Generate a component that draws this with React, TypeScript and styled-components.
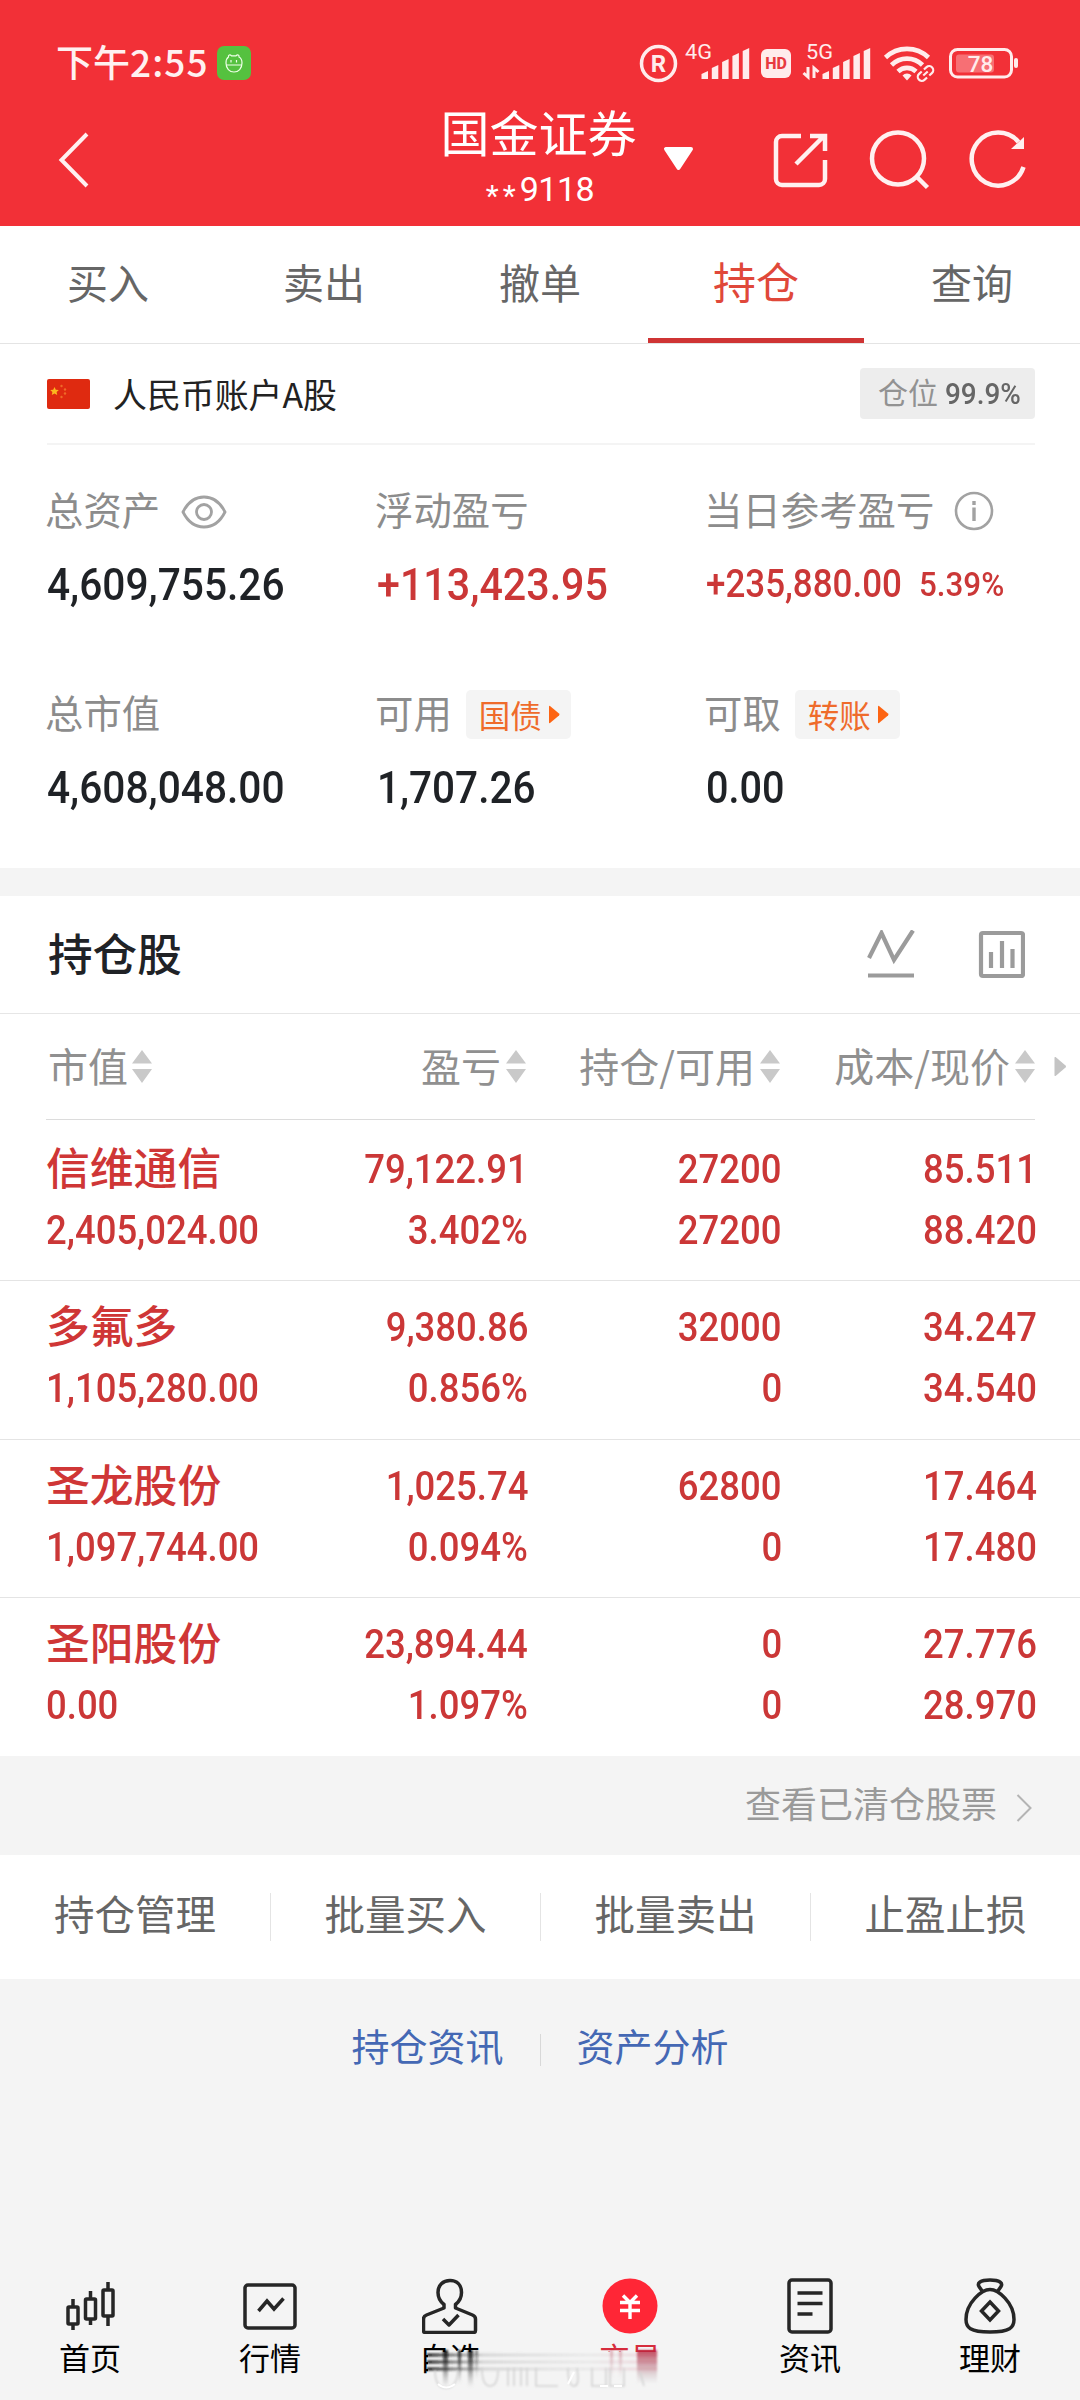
import React from "react";
import styled, { createGlobalStyle } from "styled-components";

const cjk = `"Noto Sans CJK SC", "Noto Sans", sans-serif`;

const Global = createGlobalStyle`
  html, body { margin: 0; padding: 0; background: #f4f4f4; }
  * { box-sizing: border-box; }
  body { font-family: ${cjk}; }
`;

const Page = styled.div`
  width: 1080px;
  height: 2400px;
  display: flex;
  flex-direction: column;
  background: #f4f4f4;
  overflow: hidden;
  white-space: nowrap;
`;

/* Condensed numerals */
const Num = styled.span<{ $size: number; $color?: string; $weight?: number; $from?: string; $squeeze?: number }>`
  display: inline-block;
  font-family: Roboto, "Noto Sans", sans-serif;
  font-size: ${(p) => p.$size}px;
  font-weight: ${(p) => p.$weight ?? 500};
  line-height: 1;
  color: ${(p) => p.$color ?? "#1f2226"};
  transform: scaleX(${(p) => p.$squeeze ?? 0.904});
  transform-origin: ${(p) => p.$from ?? "left"} center;
`;

const Header = styled.header`
  height: 226px;
  background: #f23037;
  color: #fff0f0;
  display: flex;
  flex-direction: column;
  flex: none;
`;
const StatusBar = styled.div`
  height: 98px;
  padding: 28px 62px 0 56px;
  display: flex;
  align-items: center;
  justify-content: space-between;
`;
const Clock = styled.div`
  display: flex;
  align-items: center;
  font-size: 37px;
  line-height: 1;
  font-weight: 500;
`;
const ClockText = styled.span`
  padding-bottom: 3px;
  margin-right: 8px;
`;
const ClockDigits = styled.span`
  letter-spacing: 1.1px;
`;
const TitleBar = styled.div`
  flex: 1;
  display: grid;
  grid-template-columns: 1fr 200px 1fr;
  align-items: start;
`;
const BackCell = styled.div`
  padding: 34px 0 0 58px;
`;
const TitleCell = styled.div`
  display: flex;
  flex-direction: column;
  align-items: center;
  color: #fff;
`;
const Broker = styled.div`
  font-size: 49px;
  line-height: 56px;
  padding-top: 5px;
  margin-left: -3px;
`;
const AccountNo = styled.div`
  display: flex;
  align-items: flex-start;
  font-family: Roboto, "Noto Sans", sans-serif;
  font-size: 34px;
  line-height: 36px;
  margin-top: 12px;
  font-weight: 400;
  letter-spacing: -0.5px;
`;
const Stars = styled.span`
  font-size: 30px;
  line-height: 36px;
  padding-top: 7px;
  letter-spacing: 4px;
`;
const ActionsCell = styled.div`
  display: flex;
  padding: 27px 0 0 22px;
`;

const Tabs = styled.nav`
  height: 118px;
  flex: none;
  display: grid;
  grid-template-columns: repeat(5, 1fr);
  background: #fff;
  border-bottom: 1px solid #e4e4e4;
`;
const Tab = styled.div<{ $active?: boolean }>`
  display: flex;
  justify-content: center;
  align-items: center;
  font-size: ${(p) => (p.$active ? 43 : 41)}px;
  line-height: 1;
  color: ${(p) => (p.$active ? "#e0483a" : "#666")};
  border-bottom: 5px solid ${(p) => (p.$active ? "#cf3434" : "transparent")};
  padding-bottom: ${(p) => (p.$active ? 4 : 1)}px;
`;

const Summary = styled.section`
  height: 524px;
  flex: none;
  padding: 0 45px 0 47px;
  background: #fff;
`;
const AccountRow = styled.div`
  height: 101px;
  display: flex;
  align-items: center;
  border-bottom: 2px solid #f4f4f4;
`;
const AccountName = styled.span`
  margin-left: 23px;
  font-size: 33.9px;
  line-height: 1;
  color: #222;
  flex: 1;
`;
const Ratio = styled.div`
  width: 175px;
  height: 51px;
  border-radius: 4px;
  background: #ededed;
  display: flex;
  align-items: center;
  gap: 7px;
  padding-left: 18px;
  font-size: 30px;
  line-height: 1;
  color: #929292;
`;
const RatioLabel = styled.span`
  padding-bottom: 6px;
`;
const Stats = styled.div`
  display: grid;
  grid-template-columns: 330px 329px 1fr;
  padding-top: 41px;
`;
const Stat = styled.div`
  height: 203px;
`;
const StatLabel = styled.div`
  display: flex;
  align-items: center;
  height: 50px;
  font-size: 38.4px;
  line-height: 1;
  color: #8c8c8c;
  margin-left: -2px;
  padding-bottom: 5px;
`;
const StatValue = styled.div`
  display: flex;
  align-items: center;
  height: 50px;
  margin-top: 23px;
`;
const Chip = styled.span`
  width: 105px;
  height: 49px;
  margin: 6px 0 0 14px;
  border-radius: 5px;
  background: #f4f4f4;
  display: flex;
  align-items: center;
  gap: 6px;
  padding-left: 13px;
  font-size: 31.5px;
  line-height: 1;
  color: #ef6b2b;
`;

const Holdings = styled.section`
  margin-top: 28px;
  flex: none;
  background: #fff;
`;
const HoldingsBar = styled.div`
  height: 118px;
  padding: 0 55px 0 48px;
  display: flex;
  align-items: center;
  border-bottom: 1px solid #e6e6e6;
`;
const HoldingsTitle = styled.h2`
  margin: 0;
  flex: 1;
  padding-bottom: 4px;
  font-size: 44.6px;
  line-height: 1;
  font-weight: 500;
  color: #202226;
`;
const columns = `
  display: grid;
  grid-template-columns: 200px 280px 254px 255px;
`;
const ColumnHeads = styled.div`
  ${columns}
  position: relative;
  height: 106px;
  margin: 0 45px 0 46px;
  align-items: center;
  border-bottom: 1px solid #dcdcdc;
`;
const Head = styled.div<{ $first?: boolean }>`
  display: flex;
  align-items: center;
  justify-content: ${(p) => (p.$first ? "flex-start" : "flex-end")};
  gap: ${(p) => (p.$first ? 4 : 5)}px;
  padding-left: ${(p) => (p.$first ? 2 : 0)}px;
  font-size: 40px;
  line-height: 1;
  color: #909090;
`;
const HeadText = styled.span`
  padding-bottom: 4px;
`;
const MoreColumns = styled.span`
  position: absolute;
  right: -32px;
  top: 42px;
  display: flex;
`;
const Row = styled.div<{ $first?: boolean }>`
  ${columns}
  height: ${(p) => (p.$first ? 160 : 158.6)}px;
  padding: ${(p) => (p.$first ? 16.5 : 13.5)}px 45px 0 46px;
  & + & { border-top: 1px solid #e4e4e4; }
`;
const Cell = styled.div<{ $first?: boolean }>`
  display: flex;
  flex-direction: column;
  align-items: ${(p) => (p.$first ? "flex-start" : "flex-end")};
  margin-right: ${(p) => (p.$first ? 0 : -2)}px;
`;
const Line = styled.div<{ $number?: boolean }>`
  height: 61px;
  display: flex;
  align-items: center;
  padding-top: ${(p) => (p.$number ? 5 : 0)}px;
`;
const StockName = styled.span`
  font-size: 43.8px;
  line-height: 1;
  font-weight: 500;
  color: #cf3636;
`;

const Cleared = styled.div`
  height: 99px;
  flex: none;
  padding: 0 48px 0 0;
  display: flex;
  align-items: center;
  justify-content: flex-end;
  gap: 19px;
  font-size: 36px;
  line-height: 1;
  color: #9a9a9a;
`;
const ClearedText = styled.span`
  padding-bottom: 7px;
`;
const Chevron = styled.svg`
  margin-top: 5px;
`;
const Actions = styled.div`
  height: 124px;
  flex: none;
  background: #fff;
  display: grid;
  grid-template-columns: repeat(4, 1fr);
  align-items: center;
`;
const Action = styled.div`
  height: 48px;
  display: flex;
  align-items: center;
  justify-content: center;
  padding-bottom: 8px;
  font-size: 40.5px;
  line-height: 1;
  color: #666;
  & + & { border-left: 1px solid #e4e4e4; }
`;
const Links = styled.div`
  flex: 1;
  display: flex;
  justify-content: center;
  padding-top: 45px;
  font-size: 38px;
  line-height: 42px;
  color: #4468b4;
`;
const LinkText = styled.span`
  padding: 0 36px;
`;
const LinkRule = styled.span`
  width: 1px;
  height: 32px;
  margin-top: 10px;
  background: #d8d8d8;
`;

const BottomNav = styled.nav`
  position: relative;
  height: 128px;
  flex: none;
  display: grid;
  grid-template-columns: repeat(6, 1fr);
`;
const NavItem = styled.div<{ $active?: boolean }>`
  display: flex;
  flex-direction: column;
  align-items: center;
  font-size: 31px;
  line-height: 34px;
  color: ${(p) => (p.$active ? "#d62c3c" : "#000")};
`;
const NavIcon = styled.div`
  height: 68px;
  display: flex;
  align-items: center;
`;
const SmudgeLayer = styled.svg`
  position: absolute;
  left: 420px;
  top: 72px;
`;

const stroke = { fill: "none", stroke: "#fff0f0", strokeWidth: 5 } as const;

const StatusIcons = () => (
  <svg width="380" height="60" viewBox="638 33 380 60" fill="#ffecec">
    <circle cx="658.500" cy="63.500" r="17" fill="none" stroke="#ffecec" strokeWidth="3.500" />
    <text x="658.500" y="72" textAnchor="middle" fontFamily="Roboto" fontWeight="700" fontSize="24">R</text>
    <text x="685" y="59" fontFamily="Roboto" fontSize="21" textLength="27" lengthAdjust="spacingAndGlyphs">4G</text>
    {[0, 1, 2, 3, 4].map((i) => (
      <path key={i} d={`M${701.500 + i * 10.300} 79V${[74, 68, 62, 56, 51][i]}l6.500 -3V79z`} />
    ))}
    <rect x="761" y="49" width="30" height="29" rx="6" />
    <text x="776" y="69" textAnchor="middle" fontFamily="Roboto" fontWeight="800" fontSize="16" fill="#e83a40">HD</text>
    <text x="806" y="59" fontFamily="Roboto" fontSize="21" textLength="27" lengthAdjust="spacingAndGlyphs">5G</text>
    <path d="M808 67v10l-4.500 -4M814 78V68l4.500 4" fill="none" stroke="#ffecec" strokeWidth="3" />
    {[0, 1, 2, 3, 4].map((i) => (
      <path key={i} d={`M${822.500 + i * 10.300} 79V${[74, 68, 62, 56, 51][i]}l6.500 -3V79z`} />
    ))}
    <g fill="none" stroke="#ffecec" strokeWidth="4.600">
      <path d="M885.500 57.500a31 31 0 0 1 43 0" />
      <path d="M891.500 65a22 22 0 0 1 31 0" />
      <path d="M898 71.500a13 13 0 0 1 18 0" />
    </g>
    <path d="M902.500 75.500a6 6 0 0 1 9 0l-4.500 5z" />
    <g fill="none" stroke="#ffecec" strokeWidth="2.200" transform="rotate(-42 925.500 73.500)">
      <path d="M924 69.500h-3.500a4 4 0 0 0 0 8h3.500M927 69.500h3.500a4 4 0 0 1 0 8h-3.500M922.500 73.500h6" />
    </g>
    <rect x="950.500" y="49.500" width="61" height="27.500" rx="7" fill="none" stroke="#ffecec" strokeWidth="3" />
    <rect x="956" y="54.500" width="38" height="18" rx="3" fill="#f76f74" />
    <text x="980.500" y="71.500" textAnchor="middle" fontFamily="Roboto" fontWeight="500" fontSize="22.500">78</text>
    <rect x="1014" y="58" width="4" height="10" rx="2" />
  </svg>
);

const AppBadge = () => (
  <svg width="34" height="34" viewBox="0 0 34 34">
    <rect width="34" height="34" rx="7" fill="#55c13f" />
    <g fill="none" stroke="#efffe9" strokeWidth="1.200">
      <path d="M9 17c0-3.500 1-5 2.500-6-.5-2 1.500-3 3-1.200h4.500c1.500-1.800 3.500-.8 3 1.200C24 12 25 13.500 25 17c0 5.500-3.500 9-8 9s-8-3.500-8-9zM9 19h16" />
      <path d="M14 14v2.500M19.500 14v2.500" />
    </g>
  </svg>
);

const Back = () => (
  <svg width="32" height="56" viewBox="0 0 32 56" {...stroke}>
    <path d="M29 2L3.500 28 29 54" strokeWidth="4" />
  </svg>
);

const HeaderIcons = () => (
  <svg width="370" height="70" viewBox="662 125 370 70" {...stroke} strokeWidth={4.500}>
    <path d="M666 149h25l-12.500 19z" fill="#fff" stroke="#fff" strokeWidth="4" strokeLinejoin="round" />
    <path d="M801 136h-19a6 6 0 0 0-6 6v37a6 6 0 0 0 6 6h37a6 6 0 0 0 6-6v-19" />
    <path d="M796 164l28-28M810 136h15v15" />
    <circle cx="898" cy="158.500" r="26" />
    <path d="M917 177l10.500 10.500" />
    <path d="M1023.500 167a26.500 26.500 0 1 1-5-25" />
    <path d="M1024 137v12h-13z" fill="#fff0f0" stroke="none" />
  </svg>
);

const Flag = () => (
  <svg width="43" height="30" viewBox="0 0 43 30">
    <rect width="43" height="30" rx="2" fill="#df2a10" />
    <path d="M7.500 8l1.300 2.700 3 .3-2.200 2 .6 3-2.700-1.400L4.800 16l.6-3-2.200-2 3-.3z" fill="#fbb81e" />
    <g fill="#ee6a28">
      <circle cx="14.500" cy="7" r="1.200" /><circle cx="18" cy="10.500" r="1.200" />
      <circle cx="18" cy="14.500" r="1.200" /><circle cx="14.500" cy="18" r="1.200" />
    </g>
  </svg>
);

const Eye = styled(({ className }: { className?: string }) => (
  <svg className={className} width="46" height="36" viewBox="0 0 46 36" fill="none" stroke="#a2a2a2" strokeWidth="2.800">
    <path d="M2 18C7 8 14 3 23 3s16 5 21 15C39 28 32 33 23 33S7 28 2 18z" />
    <circle cx="23" cy="18" r="7.500" />
  </svg>
))`
  margin: 6px 0 0 21px;
`;

const Info = styled(({ className }: { className?: string }) => (
  <svg className={className} width="40" height="40" viewBox="0 0 40 40" fill="none" stroke="#a2a2a2" strokeWidth="2.600">
    <circle cx="20" cy="20" r="18" />
    <path d="M20 16.500V30M20 10v4" strokeWidth="3.400" />
  </svg>
))`
  margin: 4px 0 0 20px;
`;

const Play = ({ color, w, h }: { color: string; w: number; h: number }) => (
  <svg width={w} height={h} viewBox="0 0 12 19">
    <path d="M1 1.500Q1 .5 2 1l9 7.500q1 1 0 2L2 18q-1 .5-1-.5z" fill={color} />
  </svg>
);

const Sort = () => (
  <svg width="20" height="33" viewBox="0 0 20 33" fill="#c9c9c9">
    <path d="M10 0l10 13.500H0zM10 33L0 19h20z" />
  </svg>
);

const BarIcons = () => (
  <svg width="158" height="50" viewBox="867 930 158 50" fill="none" stroke="#9b9b9b" strokeWidth="4.200">
    <path d="M869 958l12.500-25 12.500 27 19-29.500M868 975.500h46" />
    <rect x="981" y="933" width="42" height="43" rx="2" />
    <path d="M991 952v16M1002 941v27M1012.500 949v19" />
  </svg>
);

const navStroke = { fill: "none", stroke: "#262626", strokeWidth: 3.5 } as const;

const Candles = () => (
  <svg width="50" height="54" viewBox="0 0 50 54" {...navStroke}>
    <rect x="3" y="28" width="10" height="17" rx="1" /><path d="M8 20v8M8 45v6" />
    <rect x="20.500" y="20" width="10" height="20" rx="1" /><path d="M25.500 12v8M25.500 40v6" />
    <rect x="38" y="11" width="10" height="26" rx="1" /><path d="M43 3v8M43 37v10" />
  </svg>
);
const Quote = () => (
  <svg width="54" height="54" viewBox="0 0 54 54" {...navStroke}>
    <rect x="2" y="6" width="50" height="43" rx="3" />
    <path d="M15.500 32l8.500-10 7 8 9.500-10.500" />
  </svg>
);
const Person = () => (
  <svg width="56" height="56" viewBox="0 0 56 56" {...navStroke} strokeLinejoin="round">
    <path d="M22 30v-3.500C17.500 23 16 19 16 14.500 16 7 21 2.500 28 2.500S39.500 7 39.500 14.500c0 4.500-1.500 8.500-6 12V30l17 7c2 .8 3 2 3 4v11.500q0 2-2 2h-48q-2 0-2-2V41c0-2 1-3.200 3-4z" />
    <path d="M21 41l6 6 9.500-10" />
  </svg>
);
const Yen = () => (
  <svg width="56" height="56" viewBox="0 0 56 56">
    <circle cx="28" cy="28" r="27.500" fill="#ff2636" />
    <path d="M21 17.500l7 7 7-7M28 24v17M18 24.500h20M18 32.500h20" fill="none" stroke="#fff" strokeWidth="3.400" />
  </svg>
);
const News = () => (
  <svg width="46" height="56" viewBox="0 0 46 56" {...navStroke}>
    <rect x="2" y="2" width="42" height="52" rx="3" />
    <path d="M10.500 15h25M10.500 25.500h25M10.500 36h15" />
  </svg>
);
const Bag = () => (
  <svg width="52" height="56" viewBox="0 0 52 56" {...navStroke}>
    <path d="M18.500 13.500L15 8.500c-2-3.500 1-6.500 11-6.500s13 3 11 6.500l-3.500 5" />
    <path d="M26 11.500c-8 0-24 13-24 30 0 8 4 12.500 24 12.500s24-4.500 24-12.500c0-17-16-30-24-30z" />
    <path d="M26 24l8.500 9-8.500 9-8.500-9z" />
  </svg>
);

/* Smeared strip over the lower half of the two middle labels */
const Smudge = () => (
  <SmudgeLayer width="250" height="56" viewBox="420 2344 250 56">
    <defs>
      <linearGradient id="across" x1="0" x2="1" y1="0" y2="0">
        <stop offset="0" stopColor="#000" stopOpacity="0.95" />
        <stop offset="0.1" stopColor="#222" stopOpacity="0.6" />
        <stop offset="0.25" stopColor="#777" stopOpacity="0.25" />
        <stop offset="0.7" stopColor="#aaa" stopOpacity="0.14" />
        <stop offset="1" stopColor="#e05070" stopOpacity="0.2" />
      </linearGradient>
      <linearGradient id="down" x1="0" x2="0" y1="0" y2="1">
        <stop offset="0" stopColor="#000" stopOpacity="0.85" />
        <stop offset="0.5" stopColor="#333" stopOpacity="0.5" />
        <stop offset="1" stopColor="#999" stopOpacity="0" />
      </linearGradient>
      <linearGradient id="downRed" x1="0" x2="0" y1="0" y2="1">
        <stop offset="0" stopColor="#b8203a" stopOpacity="0.8" />
        <stop offset="0.5" stopColor="#b06070" stopOpacity="0.45" />
        <stop offset="1" stopColor="#aaa" stopOpacity="0" />
      </linearGradient>
      <filter id="soft" x="-20%" y="-20%" width="140%" height="140%"><feGaussianBlur stdDeviation="1.1" /></filter>
    </defs>
    <rect x="428" y="2352" width="232" height="38" fill="#f4f4f4" />
    <g fill="url(#across)" filter="url(#soft)">
      <rect x="427" y="2353.500" width="230" height="3" />
      <rect x="427" y="2360.500" width="230" height="3" />
      <rect x="427" y="2367.500" width="230" height="3" />
    </g>
    <g fill="url(#down)" filter="url(#soft)">
      <rect x="443" y="2350" width="5" height="38" />
      <rect x="458" y="2350" width="3" height="34" />
      <rect x="468" y="2350" width="5" height="38" />
      <rect x="475" y="2350" width="3" height="30" opacity="0.5" />
    </g>
    <g fill="url(#downRed)" filter="url(#soft)">
      <rect x="637" y="2350" width="20" height="34" />
      <rect x="610" y="2350" width="3" height="30" opacity="0.4" />
      <rect x="619" y="2350" width="3" height="30" opacity="0.4" />
    </g>
    <g fill="none" stroke="#d2d2d2" strokeWidth="1.600" filter="url(#soft)">
      <path d="M435 2370q0 18 11 18t12-18M482 2368q0 18 8 18t8-16M508 2368v18M514 2368v18M521 2368v18M527 2368v18M536 2368v18h22M568 2368q0 18 6 18t3-18M592 2368v18h14v-18M610 2368v18h14v-18M640 2372q4 14 4 14" />
    </g>
    <path d="M438 2384q8 7 17 0M568 2384l6-12M600 2386h8M614 2386h8" fill="none" stroke="#fff" strokeWidth="2" />
  </SmudgeLayer>
);

const red = "#cb3737";

const rows = [
  { name: "信维通信", cells: [["", "2,405,024.00"], ["79,122.91", "3.402%"], ["27200", "27200"], ["85.511", "88.420"]] },
  { name: "多氟多", cells: [["", "1,105,280.00"], ["9,380.86", "0.856%"], ["32000", "0"], ["34.247", "34.540"]] },
  { name: "圣龙股份", cells: [["", "1,097,744.00"], ["1,025.74", "0.094%"], ["62800", "0"], ["17.464", "17.480"]] },
  { name: "圣阳股份", cells: [["", "0.00"], ["23,894.44", "1.097%"], ["0", "0"], ["27.776", "28.970"]] },
];

const nav = [
  { label: "首页", icon: <Candles /> },
  { label: "行情", icon: <Quote /> },
  { label: "自选", icon: <Person /> },
  { label: "交易", icon: <Yen />, active: true },
  { label: "资讯", icon: <News /> },
  { label: "理财", icon: <Bag /> },
];

export default function App() {
  return (
    <Page>
      <Global />
      <Header>
        <StatusBar>
          <Clock>
            <ClockText>下午<ClockDigits>2:55</ClockDigits></ClockText>
            <AppBadge />
          </Clock>
          <StatusIcons />
        </StatusBar>
        <TitleBar>
          <BackCell><Back /></BackCell>
          <TitleCell>
            <Broker>国金证券</Broker>
            <AccountNo><Stars>**</Stars>9118</AccountNo>
          </TitleCell>
          <ActionsCell><HeaderIcons /></ActionsCell>
        </TitleBar>
      </Header>

      <Tabs>
        {["买入", "卖出", "撤单", "持仓", "查询"].map((t) => (
          <Tab key={t} $active={t === "持仓"}>{t}</Tab>
        ))}
      </Tabs>

      <Summary>
        <AccountRow>
          <Flag />
          <AccountName>人民币账户A股</AccountName>
          <Ratio><RatioLabel>仓位</RatioLabel><Num $size={30} $color="#666" $squeeze={0.93}>99.9%</Num></Ratio>
        </AccountRow>
        <Stats>
          <Stat>
            <StatLabel>总资产<Eye /></StatLabel>
            <StatValue><Num $size={45}>4,609,755.26</Num></StatValue>
          </Stat>
          <Stat>
            <StatLabel>浮动盈亏</StatLabel>
            <StatValue><Num $size={45} $color={red} $squeeze={0.916}>+113,423.95</Num></StatValue>
          </Stat>
          <Stat>
            <StatLabel>当日参考盈亏<Info /></StatLabel>
            <StatValue>
              <Num $size={38} $color={red} $squeeze={0.92}>+235,880.00</Num>
              <Num $size={33} $color={red} $squeeze={0.95}>5.39%</Num>
            </StatValue>
          </Stat>
          <Stat>
            <StatLabel>总市值</StatLabel>
            <StatValue><Num $size={45}>4,608,048.00</Num></StatValue>
          </Stat>
          <Stat>
            <StatLabel>可用<Chip>国债<Play color="#fd6412" w={12} h={19} /></Chip></StatLabel>
            <StatValue><Num $size={45} $squeeze={0.9}>1,707.26</Num></StatValue>
          </Stat>
          <Stat>
            <StatLabel>可取<Chip>转账<Play color="#fd6412" w={12} h={19} /></Chip></StatLabel>
            <StatValue><Num $size={45} $squeeze={0.88}>0.00</Num></StatValue>
          </Stat>
        </Stats>
      </Summary>

      <Holdings>
        <HoldingsBar>
          <HoldingsTitle>持仓股</HoldingsTitle>
          <BarIcons />
        </HoldingsBar>
        <ColumnHeads>
          {["市值", "盈亏", "持仓/可用", "成本/现价"].map((h, i) => (
            <Head key={h} $first={i === 0}><HeadText>{h}</HeadText><Sort /></Head>
          ))}
          <MoreColumns><Play color="#c4c4c4" w={14} h={21} /></MoreColumns>
        </ColumnHeads>
        {rows.map((r, ri) => (
          <Row key={r.name} $first={ri === 0}>
            {r.cells.map(([a, b], i) => (
              <Cell key={i} $first={i === 0}>
                <Line $number={i > 0}>
                  {i === 0 ? (
                    <StockName>{r.name}</StockName>
                  ) : (
                    <Num $size={41} $color={red} $from="right" $squeeze={0.89}>{a}</Num>
                  )}
                </Line>
                <Line $number>
                  <Num $size={41} $color={red} $from={i === 0 ? "left" : "right"} $squeeze={0.89}>{b}</Num>
                </Line>
              </Cell>
            ))}
          </Row>
        ))}
      </Holdings>

      <Cleared>
        <ClearedText>查看已清仓股票</ClearedText>
        <Chevron width="16" height="28" viewBox="0 0 16 28" fill="none" stroke="#b4b4b4" strokeWidth="2">
          <path d="M1.500 1l13 13-13 13" />
        </Chevron>
      </Cleared>

      <Actions>
        {["持仓管理", "批量买入", "批量卖出", "止盈止损"].map((a) => (
          <Action key={a}>{a}</Action>
        ))}
      </Actions>

      <Links>
        <LinkText>持仓资讯</LinkText>
        <LinkRule />
        <LinkText>资产分析</LinkText>
      </Links>

      <BottomNav>
        {nav.map((n) => (
          <NavItem key={n.label} $active={n.active}>
            <NavIcon>{n.icon}</NavIcon>
            {n.label}
          </NavItem>
        ))}
        <Smudge />
      </BottomNav>
    </Page>
  );
}
